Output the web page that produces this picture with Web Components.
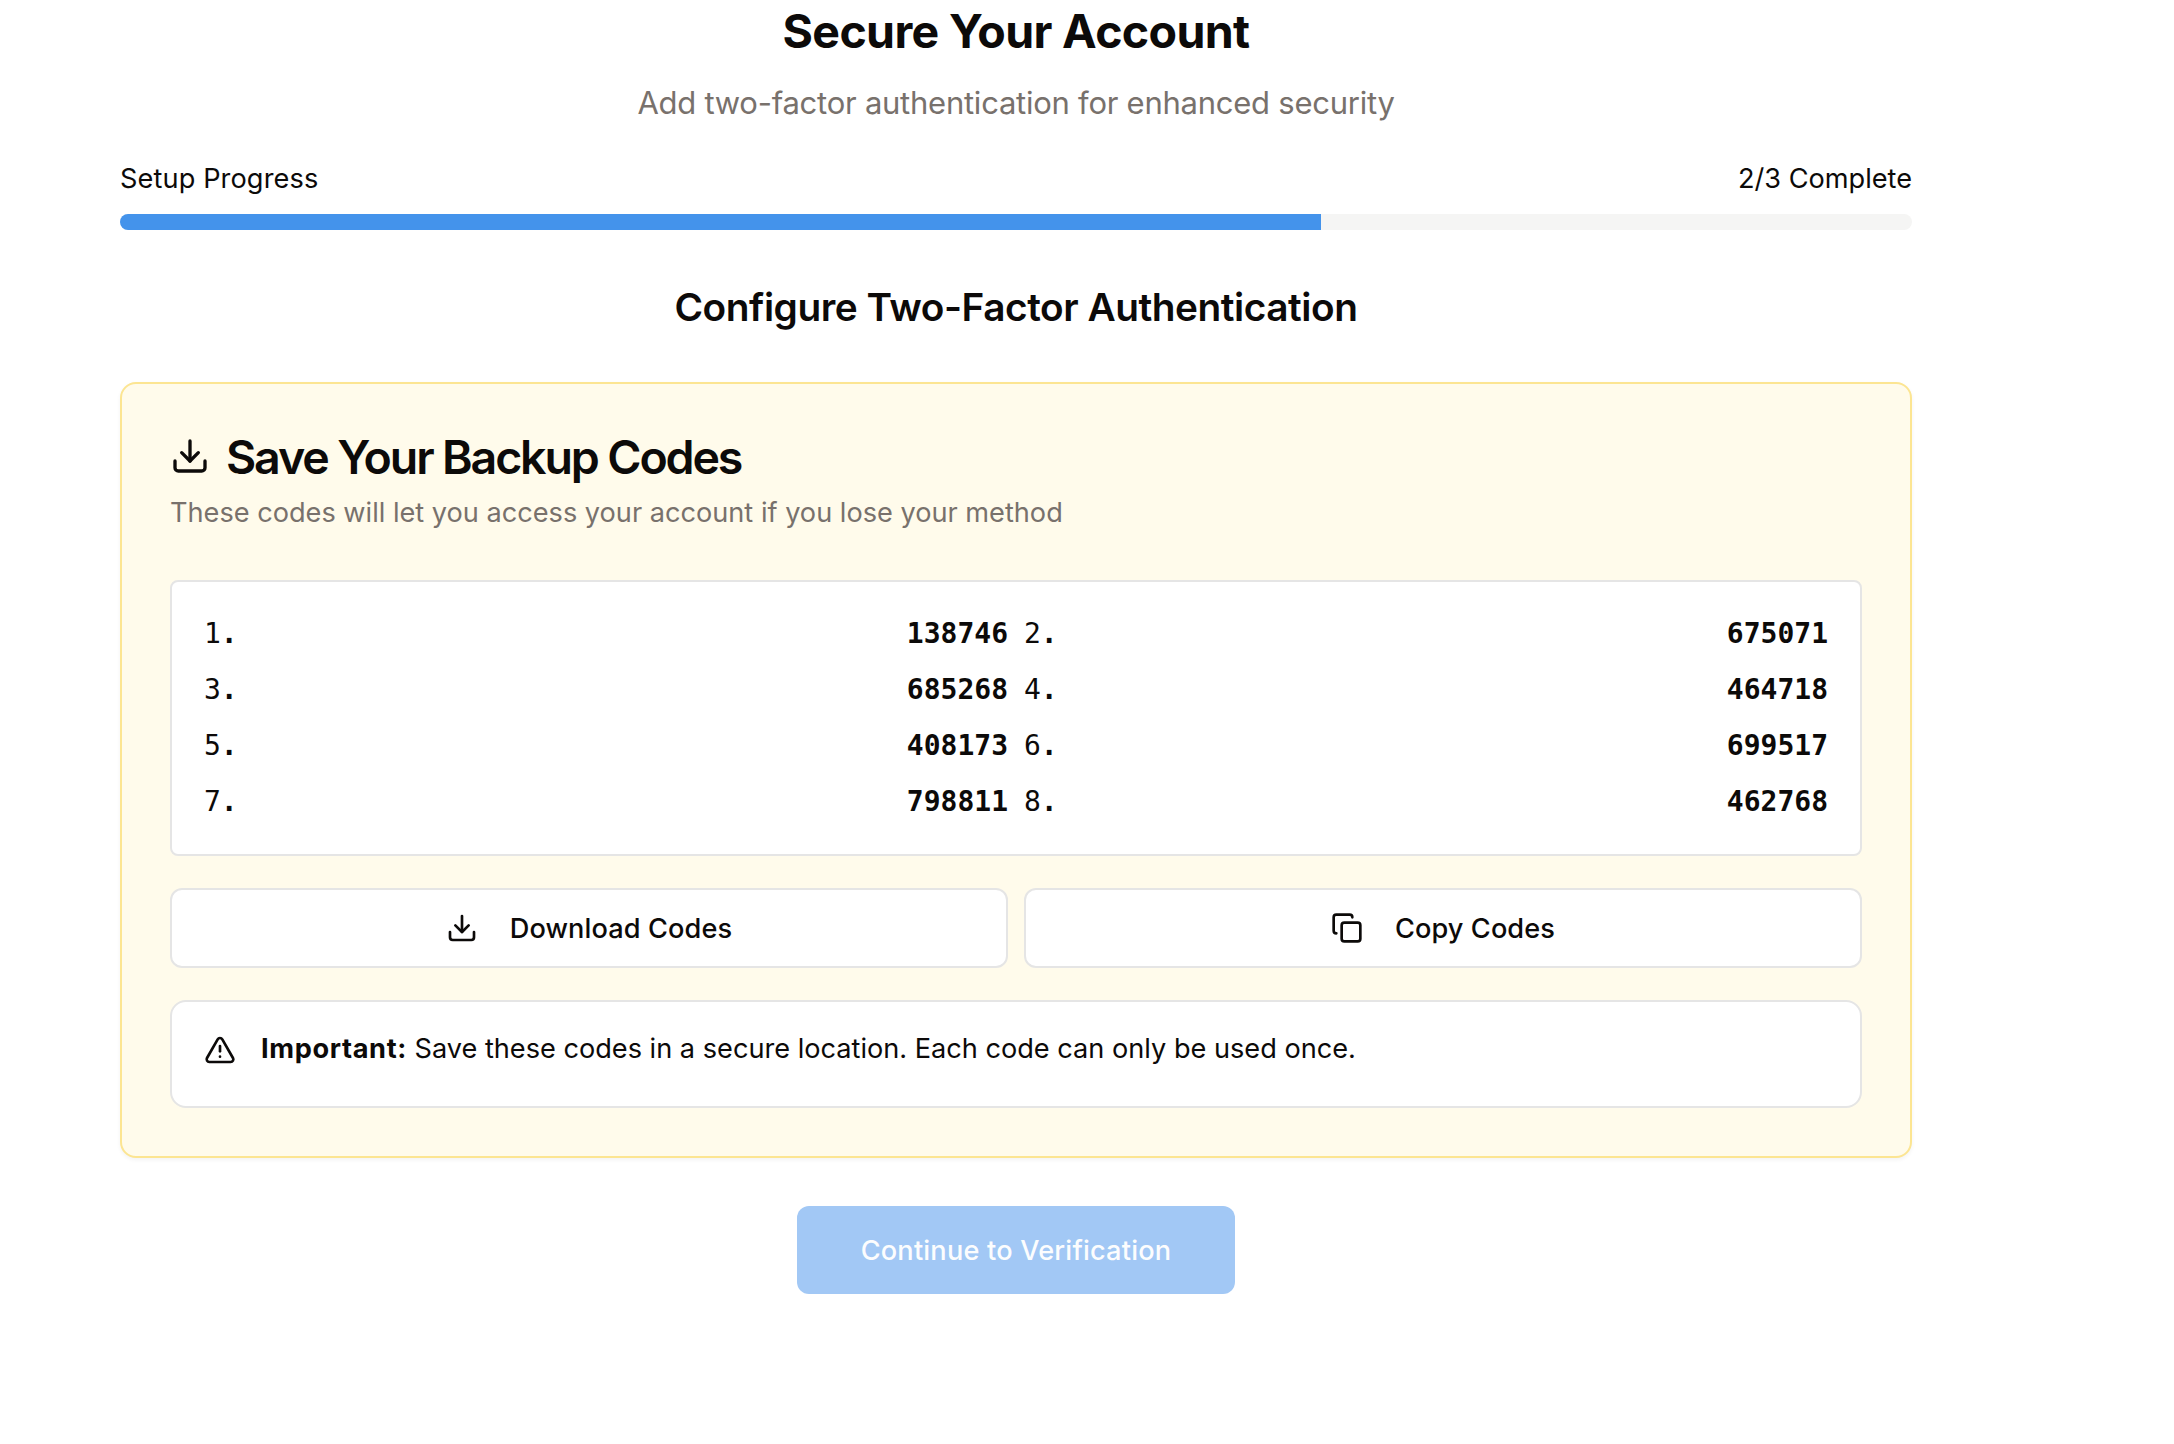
<!DOCTYPE html>
<html lang="en">
<head>
<meta charset="utf-8">
<title>Secure Your Account</title>
<style>
  body { margin: 0; background: #fff; }
</style>
</head>
<body>
<two-factor-page>
  <page-heading slot="header">
    Secure Your Account
    <span slot="subtitle">Add two-factor authentication for enhanced security</span>
  </page-heading>
  <setup-progress slot="progress" value="67">
    <span slot="label">Setup Progress</span>
    <span slot="status">2/3 Complete</span>
  </setup-progress>
  <span slot="step">Configure Two-Factor Authentication</span>
  <backup-card>
    <span slot="title">Save Your Backup Codes</span>
    <span slot="description">These codes will let you access your account if you lose your method</span>
    <code-list codes="138746 675071 685268 464718 408173 699517 798811 462768"></code-list>
    <div slot="actions"><outline-button icon="download" style="letter-spacing:.12px">Download Codes</outline-button></div>
    <div slot="actions"><outline-button icon="copy" style="letter-spacing:.1px">Copy Codes</outline-button></div>
    <alert-note slot="note"><span slot="lead">Important:</span>Save these codes in a secure location. Each code can only be used once.</alert-note>
  </backup-card>
  <primary-button slot="footer">Continue to Verification</primary-button>
</two-factor-page>
<script>
const define = (name, html, setup) => customElements.define(name, class extends HTMLElement {
  constructor() {
    super();
    this.attachShadow({ mode: 'open' }).innerHTML = html;
  }
  connectedCallback() { if (setup) setup(this, this.shadowRoot); }
});

const ICONS = {
  download: '<path d="M21 15v4a2 2 0 0 1-2 2H5a2 2 0 0 1-2-2v-4"/><path d="m7 10 5 5 5-5"/><path d="M12 15V3"/>',
  copy: '<rect width="14" height="14" x="8" y="8" rx="2"/><path d="M4 16c-1.1 0-2-.9-2-2V4c0-1.1.9-2 2-2h10c1.1 0 2 .9 2 2"/>',
  alert: '<path d="m21.73 18-8-14a2 2 0 0 0-3.48 0l-8 14A2 2 0 0 0 4 21h16a2 2 0 0 0 1.73-3"/><path d="M12 9v4"/><path d="M12 17h.01"/>'
};

define('line-icon', `<style>
  :host { display: block; flex: none; width: 32px; height: 32px; }
  svg { display: block; width: 100%; height: 100%; fill: none; stroke: currentColor; stroke-width: 2; stroke-linecap: round; stroke-linejoin: round; }
</style><svg viewBox="0 0 24 24"></svg>`, (el, root) => {
  root.querySelector('svg').innerHTML = ICONS[el.getAttribute('name')];
});

define('two-factor-page', `<style>
  :host { display: flex; flex-direction: column; box-sizing: border-box; width: 1792px; margin-left: 120px; padding-top: 7px;
    font: 400 27.15px/40px Inter, "Liberation Sans", sans-serif; color: #0c0a09; }
  .progress { margin-top: 31px; }
  h2 { margin: 49px 0 47px; text-align: center; font-size: 38.8px; line-height: 56px; font-weight: 600; letter-spacing: -.46px; }
  .footer { margin-top: 48px; display: flex; justify-content: center; }
</style>
<slot name="header"></slot>
<div class="progress"><slot name="progress"></slot></div>
<h2><slot name="step"></slot></h2>
<slot></slot>
<div class="footer"><slot name="footer"></slot></div>`);

define('page-heading', `<style>
  :host { display: block; text-align: center; }
  h1 { margin: 0; font-size: 46.5px; line-height: 48px; font-weight: 700; letter-spacing: -.64px; }
  p { margin: 24px 0 0; font-size: 31px; line-height: 48px; letter-spacing: -.25px; color: #78716c; }
</style><h1><slot></slot></h1><p><slot name="subtitle"></slot></p>`);

define('setup-progress', `<style>
  :host { display: block; }
  .row { display: flex; justify-content: space-between; padding-top: 1px; letter-spacing: .12px; }
  slot[name="status"] { letter-spacing: 0; }
  .track { margin-top: 15px; height: 16px; border-radius: 8px; background: #f5f5f4; overflow: hidden; }
  .fill { height: 100%; background: #4493eb; }
</style><div class="row"><slot name="label"></slot><slot name="status"></slot></div>
<div class="track"><div class="fill"></div></div>`, (el, root) => {
  root.querySelector('.fill').style.width = el.getAttribute('value') + '%';
});

define('backup-card', `<style>
  :host { display: block; padding: 48px; border: 2px solid #fce592; border-radius: 16px; background: #fffbeb; box-shadow: 0 2px 4px rgba(0,0,0,.05); }
  .title { display: flex; align-items: center; gap: 16px; height: 48px; }
  .title line-icon { width: 40px; height: 40px; }
  h3 { margin: 0; padding-top: 2px; font-size: 46.5px; line-height: 48px; font-weight: 600; letter-spacing: -2.13px; white-space: nowrap; }
  p { margin: 13px 0 47px; color: #78716c; }
  .actions { display: grid; grid-template-columns: 1fr 1fr; gap: 16px; margin: 32px 0; }
</style>
<div class="title"><line-icon name="download"></line-icon><h3><slot name="title"></slot></h3></div>
<p><slot name="description"></slot></p>
<slot></slot>
<div class="actions"><slot name="actions"></slot></div>
<slot name="note"></slot>`);

define('code-list', `<style>
  :host { display: grid; grid-template-columns: 1fr 1fr; gap: 16px; padding: 32px; border: 2px solid #e5e5e5; border-radius: 8px; background: #fff;
    font: 400 28px/40px "DejaVu Sans Mono", "Liberation Mono", monospace; }
  .code { display: flex; justify-content: space-between; }
  b { font-weight: 700; }
</style>`, (el, root) => {
  el.getAttribute('codes').split(' ').forEach((code, i) => {
    const row = document.createElement('div');
    row.className = 'code';
    row.innerHTML = `<span>${i + 1}<b>.</b></span><b>${code}</b>`;
    root.append(row);
  });
});

define('outline-button', `<style>
  :host { display: block; }
  button { display: flex; align-items: center; justify-content: center; gap: 32px; box-sizing: border-box; width: 100%; height: 80px;
    border: 2px solid #e5e5e5; border-radius: 12px; background: #fff; color: inherit; font: inherit; font-weight: 500; letter-spacing: inherit; padding: 0; }
  span { padding-top: 2px; }
</style><button><line-icon></line-icon><span><slot></slot></span></button>`, (el, root) => {
  const icon = document.createElement('line-icon');
  icon.setAttribute('name', el.getAttribute('icon'));
  root.querySelector('line-icon').replaceWith(icon);
});

define('alert-note', `<style>
  :host { display: flex; align-items: flex-start; gap: 25px; box-sizing: border-box; height: 108px; padding: 32px; border: 2px solid #e5e5e5; border-radius: 16px; background: #fff; }
  p { margin: -5px 0 0; }
  b { font-weight: 700; letter-spacing: .65px; margin-right: 7.5px; }
</style><line-icon name="alert"></line-icon><p><b><slot name="lead"></slot></b><slot></slot></p>`);

define('primary-button', `<style>
  :host { display: block; }
  button { display: block; width: 438px; height: 88px; padding: 2px 0 0; border: 0; border-radius: 12px; background: #a2c8f5; color: #fcfdfe;
    font: inherit; font-weight: 500; letter-spacing: .2px; }
</style><button disabled><slot></slot></button>`);

</script>
</body>
</html>
